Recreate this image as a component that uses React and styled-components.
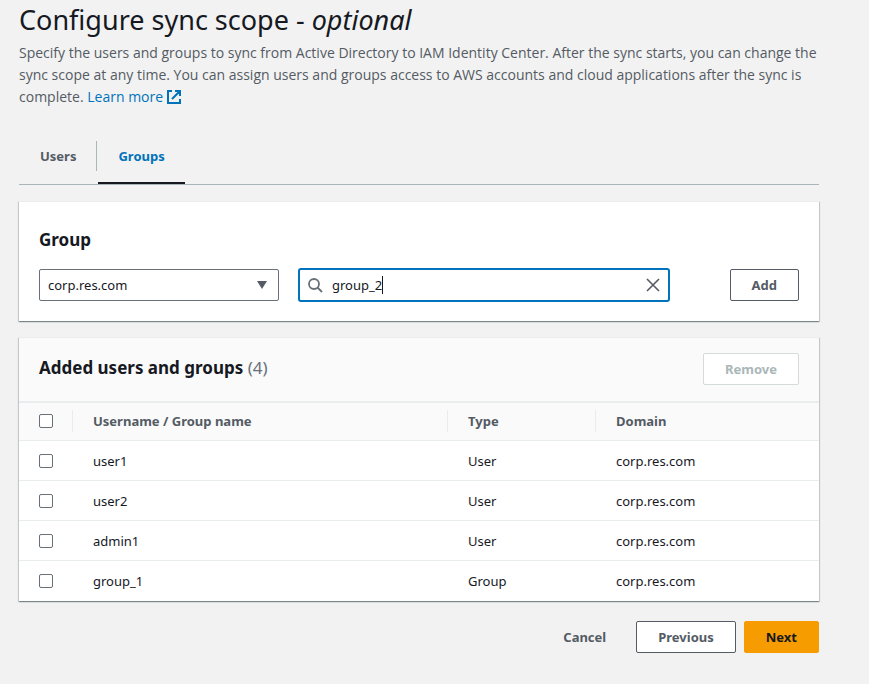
import React, { useState } from 'react';
import styled, { createGlobalStyle } from 'styled-components';

const GlobalStyle = createGlobalStyle`
  *, *::before, *::after { box-sizing: border-box; }
  body {
    margin: 0;
    background: #f2f2f2;
    color: #16191f;
    font-family: "Noto Sans", "Open Sans", sans-serif;
    font-size: 13px;
    line-height: 22px;
  }
  button, input, select { font: inherit; color: inherit; }
`;

const Page = styled.main`
  padding: 3px 50px 31px 19px;
`;

const Title = styled.h1`
  margin: 0 0 5px;
  font-size: 27px;
  line-height: 34px;
  font-weight: 400;
`;

const Description = styled.p`
  margin: 0;
  color: #545b64;
  font-family: "Open Sans", "Noto Sans", sans-serif;
  font-size: 14px;
`;

const LearnMore = styled.a`
  color: #0073bb;
  text-decoration: none;
  white-space: nowrap;

  svg { margin-left: 3px; vertical-align: -3px; }
`;

const Tabs = styled.div`
  display: flex;
  align-items: stretch;
  height: 44px;
  margin-top: 33px;
  padding-left: 1px;
  border-bottom: 1px solid #aab7b8;
`;

const Tab = styled.button`
  margin: 0;
  padding: 0 20px 12px;
  background: none;
  border: 0;
  border-bottom: 2px solid ${({ $active }) => ($active ? '#16191f' : 'transparent')};
  color: ${({ $active }) => ($active ? '#0073bb' : '#545b64')};
  font-weight: 700;
  cursor: pointer;
`;

const TabDivider = styled.span`
  width: 1px;
  height: 30px;
  margin-right: 1px;
  background: #aab7b8;
`;

const Card = styled.section`
  margin-top: 16px;
  background: #ffffff;
  border-top: 1px solid #eaeded;
  box-shadow: 0 1px 1px rgba(0, 28, 36, 0.3), 1px 1px 1px rgba(0, 28, 36, 0.15),
    -1px 1px 1px rgba(0, 28, 36, 0.15);
`;

const GroupBody = styled.div`
  padding: 27px 20px 20px;
`;

const Heading = styled.h2`
  margin: 0;
  font-size: 17px;
  line-height: 22px;
  font-weight: 700;
`;

const Count = styled.span`
  color: #687078;
  font-weight: 400;
`;

const Controls = styled.div`
  display: flex;
  align-items: center;
  gap: 20px;
  margin-top: 18px;
`;

const SelectWrap = styled.div`
  position: relative;
  width: 240px;

  svg { position: absolute; right: 12px; top: 12px; pointer-events: none; }
`;

const DomainSelect = styled.select`
  display: block;
  width: 100%;
  height: 32px;
  padding: 0 32px 0 8px;
  appearance: none;
  background: #ffffff;
  border: 1px solid #687078;
  border-radius: 2px;
`;

const Search = styled.label`
  display: flex;
  flex: 1;
  align-items: center;
  height: 34px;
  margin: -1px 40px -1px -1px;
  padding: 0 7px;
  border: 2px solid #0073bb;
  border-radius: 3px;
  cursor: text;
`;

const SearchInput = styled.input`
  field-sizing: content;
  min-width: 1px;
  margin-left: 9px;
  padding: 0;
  border: 0;
  outline: 0;
  background: none;
  caret-color: transparent;
`;

const Caret = styled.span`
  width: 1px;
  height: 18px;
  background: #16191f;
`;

const ClearButton = styled.button`
  display: flex;
  margin-left: auto;
  padding: 0;
  border: 0;
  background: none;
  cursor: pointer;
`;

const buttonLook = {
  normal: { background: '#ffffff', border: '#545b64', color: '#545b64' },
  primary: { background: '#f79c00', border: '#f79c00', color: '#16191f' },
  link: { background: 'transparent', border: 'transparent', color: '#545b64' },
};

const Button = styled.button`
  height: 32px;
  padding: 0 21px;
  background: ${({ $look = 'normal' }) => buttonLook[$look].background};
  border: 1px solid ${({ $look = 'normal' }) => buttonLook[$look].border};
  border-radius: 2px;
  color: ${({ $look = 'normal' }) => buttonLook[$look].color};
  font-weight: 700;
  cursor: pointer;

  &:disabled { border-color: #d5dbdb; color: #aab7b8; cursor: default; }
`;

const CardHeader = styled.div`
  display: flex;
  justify-content: space-between;
  padding: 15px 20px 16px;
  background: #fafafa;

  ${Heading} { margin-top: 4px; }
`;

const Table = styled.table`
  width: 100%;
  table-layout: fixed;
  border-collapse: separate;
  border-spacing: 0;
  text-align: left;
`;

const CheckColumn = styled.col`width: 54px;`;
const TypeColumn = styled.col`width: 148px;`;
const DomainColumn = styled.col`width: 223px;`;

const HeadRow = styled.tr`
  background: #fafafa;
`;

const HeadCell = styled.th`
  height: 40px;
  padding: 0 0 1px;
  border-top: 2px solid #eaeded;
  border-bottom: 1px solid #eaeded;
  color: #545b64;
  font-weight: 700;
`;

const HeadContent = styled.div`
  display: flex;
  align-items: center;
  height: 22px;
  padding-left: 20px;
  border-right: 1px solid ${({ $last }) => ($last ? 'transparent' : '#eaeded')};
`;

const Cell = styled.td`
  height: 40px;
  padding: 0 0 0 20px;
  border-bottom: 1px solid #eaeded;

  tr:last-child > & { border-bottom-color: transparent; }
`;

const Checkbox = styled.input.attrs({ type: 'checkbox' })`
  display: block;
  width: 14px;
  height: 14px;
  margin: 0;
  appearance: none;
  background: #ffffff;
  border: 1px solid #687078;
  border-radius: 2px;

  &:checked { background: #0073bb; border-color: #0073bb; }
`;

const Actions = styled.footer`
  display: flex;
  justify-content: flex-end;
  gap: 8px;
  margin-top: 20px;
`;

const ExternalIcon = () => (
  <svg width="16" height="16" viewBox="0 0 16 16" fill="none" stroke="#0073bb" strokeWidth="2" aria-hidden="true">
    <path d="M6 2H2v12h12v-4M9 2h5v5M13.5 2.5L6 10" />
  </svg>
);

const SearchIcon = () => (
  <svg width="16" height="16" viewBox="0 0 16 16" fill="none" stroke="#687078" strokeWidth="1.8" aria-hidden="true">
    <circle cx="7" cy="7" r="5" />
    <path d="M10.5 10.5L15 15" />
  </svg>
);

const CloseIcon = () => (
  <svg width="16" height="16" viewBox="0 0 16 16" fill="none" stroke="#545b64" strokeWidth="1.6" aria-hidden="true">
    <path d="M2 2l12 12M14 2L2 14" />
  </svg>
);

const ArrowIcon = () => (
  <svg width="10" height="8" viewBox="0 0 10 8" fill="#545b64" aria-hidden="true">
    <path d="M0 0h10L5 8z" />
  </svg>
);

const entries = [
  { name: 'user1', type: 'User', domain: 'corp.res.com' },
  { name: 'user2', type: 'User', domain: 'corp.res.com' },
  { name: 'admin1', type: 'User', domain: 'corp.res.com' },
  { name: 'group_1', type: 'Group', domain: 'corp.res.com' },
];

export default function App() {
  const [query, setQuery] = useState('group_2');

  return (
    <>
      <GlobalStyle />
      <Page>
        <Title>Configure sync scope - <em>optional</em></Title>
        <Description>
          Specify the users and groups to sync from Active Directory to IAM Identity Center. After the sync
          starts, you can change the sync scope at any time. You can assign users and groups access to AWS
          accounts and cloud applications after the sync is complete.{' '}
          <LearnMore href="#learn-more">Learn more<ExternalIcon /></LearnMore>
        </Description>

        <Tabs role="tablist">
          <Tab role="tab" aria-selected="false">Users</Tab>
          <TabDivider />
          <Tab role="tab" aria-selected="true" $active>Groups</Tab>
        </Tabs>

        <Card>
          <GroupBody>
            <Heading>Group</Heading>
            <Controls>
              <SelectWrap>
                <DomainSelect aria-label="Domain">
                  <option>corp.res.com</option>
                </DomainSelect>
                <ArrowIcon />
              </SelectWrap>
              <Search>
                <SearchIcon />
                <SearchInput
                  type="text"
                  aria-label="Group name"
                  value={query}
                  onChange={(event) => setQuery(event.target.value)}
                />
                <Caret />
                <ClearButton type="button" aria-label="Clear" onClick={() => setQuery('')}>
                  <CloseIcon />
                </ClearButton>
              </Search>
              <Button type="button">Add</Button>
            </Controls>
          </GroupBody>
        </Card>

        <Card>
          <CardHeader>
            <Heading>Added users and groups <Count>(4)</Count></Heading>
            <Button type="button" disabled>Remove</Button>
          </CardHeader>
          <Table>
            <colgroup>
              <CheckColumn />
              <col />
              <TypeColumn />
              <DomainColumn />
            </colgroup>
            <thead>
              <HeadRow>
                <HeadCell><HeadContent><Checkbox aria-label="Select all" /></HeadContent></HeadCell>
                <HeadCell scope="col"><HeadContent>Username / Group name</HeadContent></HeadCell>
                <HeadCell scope="col"><HeadContent>Type</HeadContent></HeadCell>
                <HeadCell scope="col"><HeadContent $last>Domain</HeadContent></HeadCell>
              </HeadRow>
            </thead>
            <tbody>
              {entries.map(({ name, type, domain }) => (
                <tr key={name}>
                  <Cell><Checkbox aria-label={`Select ${name}`} /></Cell>
                  <Cell>{name}</Cell>
                  <Cell>{type}</Cell>
                  <Cell>{domain}</Cell>
                </tr>
              ))}
            </tbody>
          </Table>
        </Card>

        <Actions>
          <Button type="button" $look="link">Cancel</Button>
          <Button type="button">Previous</Button>
          <Button type="button" $look="primary">Next</Button>
        </Actions>
      </Page>
    </>
  );
}
